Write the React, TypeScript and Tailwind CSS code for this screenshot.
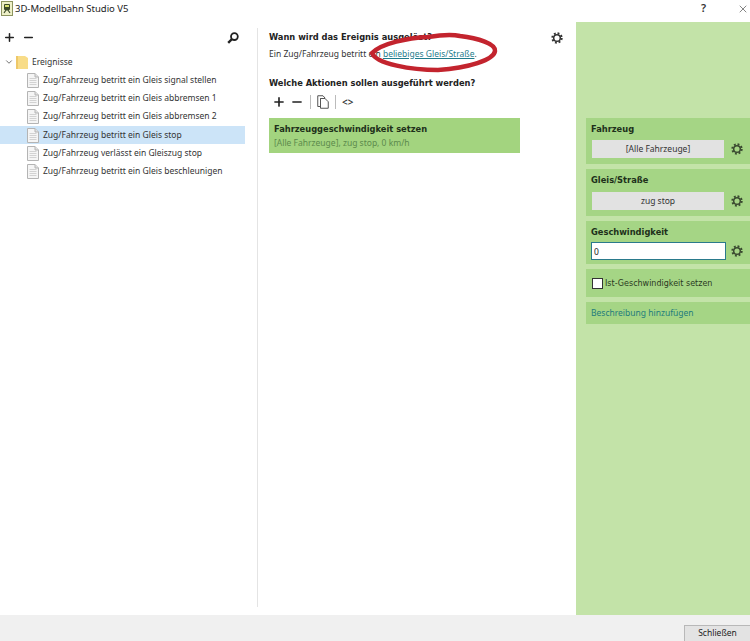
import { ChevronDown, Minus, Plus, X } from "lucide-react";

const events = [
  "Zug/Fahrzeug betritt ein Gleis signal stellen",
  "Zug/Fahrzeug betritt ein Gleis abbremsen 1",
  "Zug/Fahrzeug betritt ein Gleis abbremsen 2",
  "Zug/Fahrzeug betritt ein Gleis stop",
  "Zug/Fahrzeug verlässt ein Gleiszug stop",
  "Zug/Fahrzeug betritt ein Gleis beschleunigen",
];

function AppIcon() {
  return (
    <svg width="12" height="15" viewBox="0 0 12 15" className="shrink-0">
      <rect x="0.5" y="0.5" width="11" height="14" fill="#eef0c8" stroke="#8d9460" />
      <rect x="3" y="3" width="6" height="6" rx="1" fill="#3c4a2a" />
      <rect x="4" y="4" width="4" height="2" fill="#d8e070" />
      <path d="M3 12 L5 9 H7 L9 12" fill="none" stroke="#3c4a2a" strokeWidth="1.2" />
    </svg>
  );
}

function DocIcon() {
  return (
    <svg width="12" height="15" viewBox="0 0 12 15" className="shrink-0">
      <path d="M0.5 0.5 H8 L11.5 4 V14.5 H0.5 Z" fill="#f5f5f5" stroke="#b4b4b4" />
      <path d="M8 0.5 V4 H11.5" fill="#e2e2e2" stroke="#b4b4b4" />
      <path d="M2.5 5.5 H9.5 M2.5 7.5 H9.5 M2.5 9.5 H9.5 M2.5 11.5 H9.5" stroke="#d2d2d2" />
    </svg>
  );
}

function FolderIcon() {
  return (
    <svg width="12" height="14" viewBox="0 0 12 14" className="shrink-0">
      <path d="M0 1 H9 L12 3 V14 H0 Z" fill="#f8dc88" />
      <path d="M0 1 H2 V14 H0 Z" fill="#eec869" />
    </svg>
  );
}

function CopyIcon() {
  return (
    <svg width="12" height="14" viewBox="0 0 12 14" className="shrink-0">
      <path d="M0.75 0.75 H6 L8 3 V3.5 H3.5 V11.5 H0.75 Z" fill="none" stroke="#555" strokeWidth="1" />
      <path d="M3.5 3.5 H8 L11.25 6.75 V13.25 H3.5 Z" fill="none" stroke="#555" strokeWidth="1" />
    </svg>
  );
}

function SearchGlyph() {
  return (
    <svg width="12" height="12" viewBox="0 0 12 12" className="ml-auto">
      <circle cx="7.4" cy="4.6" r="3.4" fill="none" stroke="#222" strokeWidth="1.8" />
      <path d="M5 7 L1.2 10.8" stroke="#222" strokeWidth="2.4" />
    </svg>
  );
}

function Gear({ color = "#3a4a30" }: { color?: string }) {
  return (
    <svg width="12" height="12" viewBox="0 0 12 12" className="shrink-0">
      <circle cx="6" cy="6" r="3.3" fill="none" stroke={color} strokeWidth="1.5" />
      <circle cx="6" cy="6" r="4.7" fill="none" stroke={color} strokeWidth="2" strokeDasharray="1.85 1.84" />
    </svg>
  );
}

function PickerRow({ label }: { label: string }) {
  return (
    <div className="flex items-center">
      <div className="ml-[6px] flex h-[18px] w-[132px] items-center justify-center bg-[#e2e2e2] text-[8.5px] text-[#333]">
        {label}
      </div>
      <div className="ml-[7px]">
        <Gear />
      </div>
    </div>
  );
}

function BandTitle({ children }: { children: string }) {
  return <div className="pl-[5px] font-['DejaVu_Sans'] text-[8.3px] leading-[12px] font-bold text-[#20301a]">{children}</div>;
}

export default function App() {
  return (
    <div className="relative flex h-[641px] w-[750px] flex-col overflow-hidden bg-white font-['Noto_Sans',sans-serif] text-[8.5px] text-[#333]">
      {/* title bar */}
      <div className="flex h-[22px] shrink-0 items-start">
        <div className="mt-px ml-[1px]">
          <AppIcon />
        </div>
        <span className="mt-[2px] ml-[2px] text-[9.5px] leading-[14px] text-[#222]">3D-Modellbahn Studio V5</span>
        <span className="mt-[1px] ml-auto text-[11px] leading-[14px] font-semibold text-[#333]">?</span>
        <X size={12} strokeWidth={1.2} className="mt-[3px] ml-[31px] text-[#333]" />
        <span className="w-[1px]" />
      </div>

      <div className="flex min-h-0 flex-1">
        {/* event tree */}
        <div className="flex w-[257px] shrink-0 flex-col">
          <div className="flex h-[22px] items-center pt-[9px] pr-[18px] pl-[3px]">
            <Plus size={13} strokeWidth={2.8} className="text-[#222]" />
            <Minus size={13} strokeWidth={2.8} className="ml-[6px] text-[#222]" />
            <SearchGlyph />
          </div>
          <div className="mt-[9px] flex h-[18px] items-center pl-[4px]">
            <ChevronDown size={10} strokeWidth={1.8} className="text-[#444]" />
            <span className="ml-[2px]">
              <FolderIcon />
            </span>
            <span className="ml-[4px] text-[#333]">Ereignisse</span>
          </div>
          <ul className="w-[245px]">
            {events.map((e, i) => (
              <li key={e} className={`flex h-[18.3px] items-center pl-[27px] ${i === 3 ? "bg-[#cce4f8]" : ""}`}>
                <DocIcon />
                <span className="ml-[4px] whitespace-nowrap text-[#333]">{e}</span>
              </li>
            ))}
          </ul>
        </div>

        <div className="mt-[6px] mb-[8px] w-px shrink-0 bg-[#e4e4e4]" />

        {/* main column */}
        <div className="flex w-[318px] shrink-0 flex-col pl-[11px]">
          <div className="mt-[9px] flex items-start">
            <div className="w-[271px]">
              <div className="font-['DejaVu_Sans'] text-[8.3px] leading-[13px] font-bold text-[#222]">Wann wird das Ereignis ausgelöst?</div>
              <div className="mt-[3px] leading-[13px] text-[#333]">
                Ein Zug/Fahrzeug betritt ein <span className="text-[#1f7c8c] underline">beliebiges Gleis/Straße</span>.
              </div>
            </div>
            <div className="mt-[1px] ml-[11px]">
              <Gear color="#333" />
            </div>
          </div>
          <div className="mt-[17px] font-['DejaVu_Sans'] text-[8.3px] leading-[13px] font-bold text-[#222]">Welche Aktionen sollen ausgeführt werden?</div>
          <div className="mt-[4px] flex h-[16px] items-center pl-[3px]">
            <Plus size={14} strokeWidth={2.8} className="text-[#222]" />
            <Minus size={14} strokeWidth={2.8} className="ml-[4px] text-[#222]" />
            <div className="mx-[6px] h-[14px] w-px bg-[#bbb]" />
            <CopyIcon />
            <div className="mx-[6px] h-[14px] w-px bg-[#bbb]" />
            <span className="text-[10px] font-semibold text-[#333]">&lt;&gt;</span>
          </div>
          <div className="mt-[8px] flex h-[35px] w-[251px] flex-col justify-center bg-[#a3d47f] pl-[5px]">
            <div className="font-['DejaVu_Sans'] text-[8.3px] leading-[13px] font-bold text-[#20301a]">Fahrzeuggeschwindigkeit setzen</div>
            <div className="leading-[13px] text-[#5c8a4c]">[Alle Fahrzeuge], zug stop, 0 km/h</div>
          </div>
        </div>

        {/* properties */}
        <div className="flex flex-1 flex-col gap-[5px] bg-[#c3e3a8] pt-[96px] pl-[10px]">
          <div className="h-[46px] bg-[#a5d585] pt-[5px]">
            <BandTitle>Fahrzeug</BandTitle>
            <div className="mt-[5px]">
              <PickerRow label="[Alle Fahrzeuge]" />
            </div>
          </div>
          <div className="h-[47px] bg-[#a5d585] pt-[5px]">
            <BandTitle>Gleis/Straße</BandTitle>
            <div className="mt-[6px]">
              <PickerRow label="zug stop" />
            </div>
          </div>
          <div className="h-[43px] bg-[#a5d585] pt-[5px]">
            <BandTitle>Geschwindigkeit</BandTitle>
            <div className="mt-[4px] flex items-center">
              <input
                readOnly
                value="0"
                className="ml-[5px] h-[18px] w-[135px] border border-[#2a7a8c] bg-white pl-[2px] text-[8.5px] text-[#222] outline-none"
              />
              <div className="ml-[5px]">
                <Gear />
              </div>
            </div>
          </div>
          <label className="flex h-[28px] items-center gap-[2px] bg-[#a5d585] pl-[6px]">
            <input type="checkbox" readOnly className="h-[11px] w-[11px] appearance-none border border-[#333] bg-white" />
            <span className="font-['DejaVu_Sans'] text-[8px] leading-[11px] text-[#2a3a22]">Ist-Geschwindigkeit setzen</span>
          </label>
          <div className="flex h-[22px] items-center bg-[#a5d585] pl-[5px] text-[#1f7c7c]">Beschreibung hinzufügen</div>
        </div>
      </div>

      {/* footer */}
      <div className="flex h-[26px] shrink-0 items-end justify-end bg-[#f0f0f0]">
        <div className="flex h-[16px] w-[66px] items-center justify-center border-t border-l border-[#b8b8b8] bg-[#e3e3e3] text-[#222]">
          Schließen
        </div>
      </div>

      {/* red marker drawn over the screenshot */}
      <svg width="136" height="46" viewBox="0 0 136 46" className="absolute top-[30px] left-[368px]">
        <path
          d="M4 23 C14 13 40 8 60 7 C72 5 84 4 92 6 C110 8 128 14 127 21 C126 30 100 38 70 40 C44 40 8 34 4 23 Z"
          fill="none"
          stroke="#c3242e"
          strokeWidth="4.5"
        />
      </svg>
    </div>
  );
}
